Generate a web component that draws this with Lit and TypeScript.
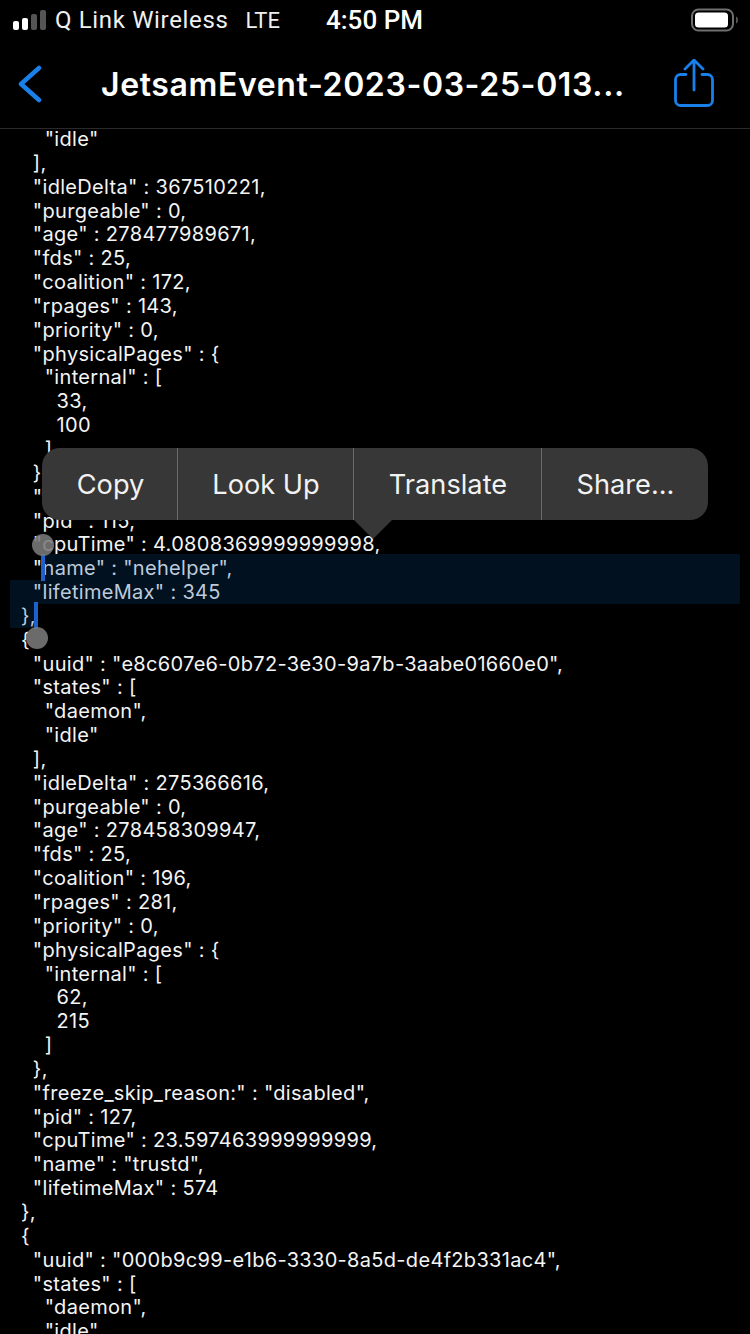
import { LitElement, html, css } from "lit";
import { customElement } from "lit/decorators.js";

const before = `    "idle"
  ],
  "idleDelta" : 367510221,
  "purgeable" : 0,
  "age" : 278477989671,
  "fds" : 25,
  "coalition" : 172,
  "rpages" : 143,
  "priority" : 0,
  "physicalPages" : {
    "internal" : [
      33,
      100
    ]
  },
  "freeze_skip_reason:" : "disabled",
  "pid" : 115,
  "cpuTime" : 4.0808369999999998,
  "`;
const selected = `name" : "nehelper",
  "lifetimeMax" : 345
},`;
const after = `
{
  "uuid" : "e8c607e6-0b72-3e30-9a7b-3aabe01660e0",
  "states" : [
    "daemon",
    "idle"
  ],
  "idleDelta" : 275366616,
  "purgeable" : 0,
  "age" : 278458309947,
  "fds" : 25,
  "coalition" : 196,
  "rpages" : 281,
  "priority" : 0,
  "physicalPages" : {
    "internal" : [
      62,
      215
    ]
  },
  "freeze_skip_reason:" : "disabled",
  "pid" : 127,
  "cpuTime" : 23.597463999999999,
  "name" : "trustd",
  "lifetimeMax" : 574
},
{
  "uuid" : "000b9c99-e1b6-3330-8a5d-de4f2b331ac4",
  "states" : [
    "daemon",
    "idle"
  ],`;

@customElement("app-root")
export class AppRoot extends LitElement {
  static styles = css`
    :host {
      display: block;
      position: relative;
      width: 750px;
      height: 1334px;
      overflow: hidden;
      background: #000;
      color: #fff;
      font-family: Inter, "Liberation Sans", sans-serif;
    }
    .status {
      height: 40px;
      display: flex;
      align-items: center;
      padding: 0 11px 0 13px;
      font-family: Roboto, sans-serif;
      font-size: 24px;
    }
    .carrier { margin-left: 9px; letter-spacing: 0.65px; color: #f0f0f0; }
    .lte { margin-left: 17px; font-size: 22px; color: #f0f0f0; }
    .time { margin-left: 46px; font-size: 26px; font-weight: 500; }
    .battery { margin-left: auto; display: block; }
    .signal { display: block; }
    .nav {
      height: 88px;
      display: flex;
      align-items: center;
      padding: 0 36px 0 18px;
      border-bottom: 1px solid #2a2a2a;
    }
    .title {
      flex: 1;
      margin-left: 55px;
      font-size: 32px;
      font-weight: 600;
      letter-spacing: 0.62px;
      white-space: nowrap;
    }
    .body {
      position: relative;
      height: 1205px;
      overflow: hidden;
    }
    pre {
      margin: -1px 0 0;
      padding: 0 0 0 21px;
      font: inherit;
      font-size: 20px;
      letter-spacing: 0.31px;
      line-height: 23.85px;
      color: #f4f4f4;
    }
    .sel-bg { position: absolute; background: #021120; }
    .sel-text { position: relative; color: #bccbdc; }
    .bar { position: absolute; background: #1b62cf; width: 4px; }
    .knob { position: absolute; width: 22px; height: 22px; border-radius: 50%; background: rgba(122, 122, 122, 0.88); }
    .menu {
      position: absolute;
      left: 42px;
      top: 319px;
      width: 666px;
      height: 72px;
      display: flex;
      background: #373737;
      border-radius: 18px;
      font-size: 27.2px;
      color: #f2f2f2;
    }
    .menu span {
      display: flex;
      align-items: center;
      justify-content: center;
      box-sizing: border-box;
      padding-left: 1px;
      border-left: 1px solid #6a6a6a;
    }
    .menu span:first-child { border-left: 0; padding-left: 2px; }
    .tip {
      position: absolute;
      left: 354px;
      top: 391px;
      width: 38px;
      height: 19px;
      background: #373737;
      clip-path: polygon(0 0, 100% 0, 50% 100%);
    }
  `;

  render() {
    return html`
      <div class="status">
        <svg class="signal" width="33" height="22" viewBox="0 0 33 22">
          <rect x="0" y="12" width="6" height="9" rx="2" fill="#fff"/>
          <rect x="9" y="9" width="6" height="12" rx="2" fill="#fff"/>
          <rect x="18" y="5" width="6" height="16" rx="2" fill="#555"/>
          <rect x="27" y="1" width="6" height="20" rx="2" fill="#555"/>
        </svg>
        <span class="carrier">Q Link Wireless</span>
        <span class="lte">LTE</span>
        <span class="time">4:50 PM</span>
        <svg class="battery" width="48" height="24" viewBox="0 0 48 24">
          <rect x="1" y="1.500" width="41" height="21" rx="6.500" fill="none" stroke="#6e6e6e" stroke-width="2"/>
          <rect x="4" y="4.500" width="33" height="15" rx="3.500" fill="#fff"/>
          <path d="M45 8.500c1.500.5 2 2 2 3.500s-.5 3-2 3.500z" fill="#555"/>
        </svg>
      </div>
      <div class="nav">
        <svg width="28" height="40" viewBox="0 0 28 40">
          <path d="M21 4 3 20l18 16" fill="none" stroke="#1a7fe8" stroke-width="4.500" stroke-linecap="round" stroke-linejoin="round"/>
        </svg>
        <div class="title">JetsamEvent-2023-03-25-013...</div>
        <svg width="40" height="50" viewBox="0 0 40 50">
          <path d="M12 15.500H6.500a5 5 0 0 0-5 5v21a5 5 0 0 0 5 5h27a5 5 0 0 0 5-5v-21a5 5 0 0 0-5-5H28M20 31V2M11 10l9-9 9 9" fill="none" stroke="#1a7fe8" stroke-width="2.800" stroke-linecap="round" stroke-linejoin="round"/>
        </svg>
      </div>
      <div class="body">
        <div class="sel-bg" style="left:44px;top:425px;width:696px;height:26px"></div>
        <div class="sel-bg" style="left:10px;top:451px;width:730px;height:24px"></div>
        <div class="sel-bg" style="left:10px;top:475px;width:26px;height:24px"></div>
        <pre>${before}<span class="sel-text">${selected}</span>${after}</pre>
        <div class="bar" style="left:41px;top:425px;height:27px"></div>
        <div class="knob" style="left:32px;top:405px"></div>
        <div class="bar" style="left:34px;top:473px;height:27px"></div>
        <div class="knob" style="left:26px;top:498px"></div>
        <div class="menu">
          <span style="width:135px">Copy</span>
          <span style="width:176px">Look Up</span>
          <span style="width:188px">Translate</span>
          <span style="width:167px">Share...</span>
        </div>
        <div class="tip"></div>
      </div>
    `;
  }
}
